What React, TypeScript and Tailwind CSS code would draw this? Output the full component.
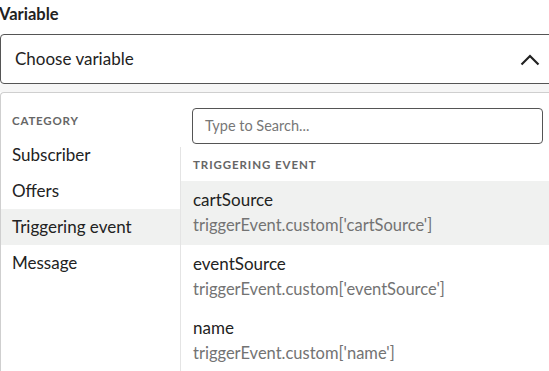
import { useState } from 'react';

const categories = ['Subscriber', 'Offers', 'Triggering event', 'Message'];

const variables = [
  { name: 'cartSource', path: "triggerEvent.custom['cartSource']" },
  { name: 'eventSource', path: "triggerEvent.custom['eventSource']" },
  { name: 'name', path: "triggerEvent.custom['name']" },
];

export default function App() {
  const [active] = useState('Triggering event');
  const [hovered] = useState('cartSource');

  return (
    <div
      className="w-[549px] h-[371px] overflow-hidden bg-white text-[#222]"
      style={{ fontFamily: 'Lato, "Open Sans", sans-serif' }}
    >
      {/* Label */}
      <div className="h-[34px] pt-[3px] -ml-[1px] text-[16.5px] font-bold leading-[22px]">Variable</div>

      {/* Select */}
      <div className="flex items-center justify-between h-[50px] -mr-[4px] border border-[#555] rounded-[4px] pl-[14px] pr-[12px]">
        <span className="text-[17px] leading-[22px] -mt-[1px]">Choose variable</span>
        <svg width="20" height="12" viewBox="0 0 20 12" fill="none" className="mt-[1px]">
          <path d="M1.5 10.5 L10 2 L18.5 10.5" stroke="#222" strokeWidth="2.2" />
        </svg>
      </div>

      <div className="h-[8px] bg-[#f6f6f6]" />

      {/* Dropdown panel */}
      <div className="flex -mr-[4px] border-t border-l border-[#cfcfcf] rounded-tl-[4px] h-[300px]">
        <div className="w-[179px] shrink-0">
          <div className="pl-[11px] pt-[20px] pb-[8px] text-[11.5px] leading-[16px] font-bold tracking-[0.07em] text-[#666]">
            CATEGORY
          </div>
          {categories.map((c) => (
            <div
              key={c}
              className={`h-[36px] flex items-center pl-[11px] text-[17px] ${
                c === active ? 'bg-[#f0f1f0]' : ''
              }`}
            >
              {c}
            </div>
          ))}
        </div>

        <div className="flex-1 flex flex-col">
          <div className="pt-[15px] pl-[12px] pr-[10px] pb-[3px]">
            <div className="h-[36px] border border-[#555] rounded-[4px] flex items-center pl-[12px] text-[14.5px] text-[#777]">
              Type to Search...
            </div>
          </div>
          <div className="flex-1 border-l border-[#e4e4e4]">
            <div className="h-[34px] pt-[2px] flex items-center pl-[12px] text-[11.5px] font-bold tracking-[0.08em] text-[#666]">
              TRIGGERING EVENT
            </div>
            {variables.map((v) => (
              <div
                key={v.name}
                className={`h-[64px] pl-[12px] pt-[7px] ${v.name === hovered ? 'bg-[#f0f1f0]' : ''}`}
              >
                <div className="text-[17px] leading-[24px]">{v.name}</div>
                <div className="text-[16.5px] leading-[26px] text-[#737373]">{v.path}</div>
              </div>
            ))}
          </div>
        </div>
      </div>
    </div>
  );
}
